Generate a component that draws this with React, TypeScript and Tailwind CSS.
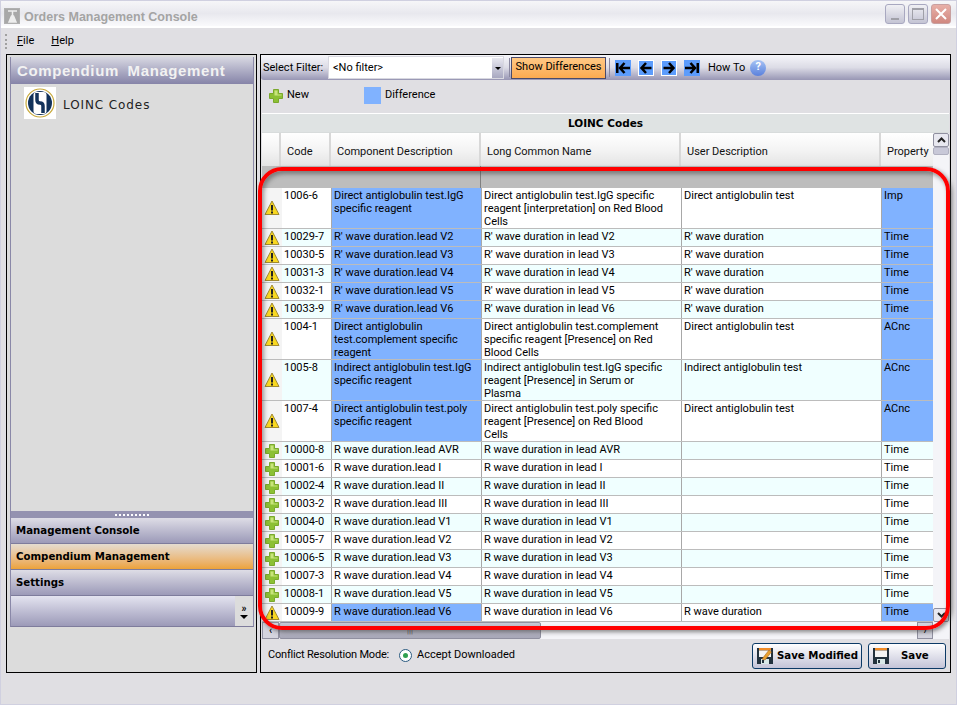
import type { ReactNode } from 'react';

type Row = {
  kind: 'warn' | 'new';
  code: string;
  comp: string;
  long: string;
  user: string;
  prop: string;
  h: number;
};

const rows: Row[] = [
  { kind: 'warn', code: '1006-6', comp: 'Direct antiglobulin test.IgG specific reagent', long: 'Direct antiglobulin test.IgG specific reagent [interpretation] on Red Blood Cells', user: 'Direct antiglobulin test', prop: 'Imp', h: 41 },
  { kind: 'warn', code: '10029-7', comp: "R' wave duration.lead V2", long: "R' wave duration in lead V2", user: "R' wave duration", prop: 'Time', h: 18 },
  { kind: 'warn', code: '10030-5', comp: "R' wave duration.lead V3", long: "R' wave duration in lead V3", user: "R' wave duration", prop: 'Time', h: 18 },
  { kind: 'warn', code: '10031-3', comp: "R' wave duration.lead V4", long: "R' wave duration in lead V4", user: "R' wave duration", prop: 'Time', h: 18 },
  { kind: 'warn', code: '10032-1', comp: "R' wave duration.lead V5", long: "R' wave duration in lead V5", user: "R' wave duration", prop: 'Time', h: 18 },
  { kind: 'warn', code: '10033-9', comp: "R' wave duration.lead V6", long: "R' wave duration in lead V6", user: "R' wave duration", prop: 'Time', h: 18 },
  { kind: 'warn', code: '1004-1', comp: 'Direct antiglobulin test.complement specific reagent', long: 'Direct antiglobulin test.complement specific reagent [Presence] on Red Blood Cells', user: 'Direct antiglobulin test', prop: 'ACnc', h: 41 },
  { kind: 'warn', code: '1005-8', comp: 'Indirect antiglobulin test.IgG specific reagent', long: 'Indirect antiglobulin test.IgG specific reagent [Presence] in Serum or Plasma', user: 'Indirect antiglobulin test', prop: 'ACnc', h: 41 },
  { kind: 'warn', code: '1007-4', comp: 'Direct antiglobulin test.poly specific reagent', long: 'Direct antiglobulin test.poly specific reagent [Presence] on Red Blood Cells', user: 'Direct antiglobulin test', prop: 'ACnc', h: 41 },
  { kind: 'new', code: '10000-8', comp: 'R wave duration.lead AVR', long: 'R wave duration in lead AVR', user: '', prop: 'Time', h: 18 },
  { kind: 'new', code: '10001-6', comp: 'R wave duration.lead I', long: 'R wave duration in lead I', user: '', prop: 'Time', h: 18 },
  { kind: 'new', code: '10002-4', comp: 'R wave duration.lead II', long: 'R wave duration in lead II', user: '', prop: 'Time', h: 18 },
  { kind: 'new', code: '10003-2', comp: 'R wave duration.lead III', long: 'R wave duration in lead III', user: '', prop: 'Time', h: 18 },
  { kind: 'new', code: '10004-0', comp: 'R wave duration.lead V1', long: 'R wave duration in lead V1', user: '', prop: 'Time', h: 18 },
  { kind: 'new', code: '10005-7', comp: 'R wave duration.lead V2', long: 'R wave duration in lead V2', user: '', prop: 'Time', h: 18 },
  { kind: 'new', code: '10006-5', comp: 'R wave duration.lead V3', long: 'R wave duration in lead V3', user: '', prop: 'Time', h: 18 },
  { kind: 'new', code: '10007-3', comp: 'R wave duration.lead V4', long: 'R wave duration in lead V4', user: '', prop: 'Time', h: 18 },
  { kind: 'new', code: '10008-1', comp: 'R wave duration.lead V5', long: 'R wave duration in lead V5', user: '', prop: 'Time', h: 18 },
  { kind: 'warn', code: '10009-9', comp: 'R wave duration.lead V6', long: 'R wave duration in lead V6', user: 'R wave duration', prop: 'Time', h: 18 },
];

function WarnIcon() {
  return (
    <svg width="16" height="16" viewBox="0 0 16 16">
      <path d="M8 1 L15 14.5 H1 Z" fill="#f8d820" stroke="#a08a30" strokeWidth="1" strokeLinejoin="round" />
      <rect x="7" y="5" width="2" height="5.5" fill="#222" />
      <rect x="7" y="11.5" width="2" height="2" fill="#222" />
    </svg>
  );
}

function PlusIcon() {
  return (
    <svg width="14" height="14" viewBox="0 0 14 14">
      <path d="M4.5 0.5 H9.5 V4.5 H13.5 V9.5 H9.5 V13.5 H4.5 V9.5 H0.5 V4.5 H4.5 Z" fill="#8cc034" stroke="#7aa82c" strokeWidth="1" />
      <path d="M5.5 1.5 H8.5 V5.5 H12.5 V6.5 H5.5 Z" fill="#c8e47c" />
    </svg>
  );
}

function NavIcon({ dir, framed }: { dir: 'first' | 'prev' | 'next' | 'last'; framed?: boolean }) {
  const flip = dir === 'next' || dir === 'last';
  const bar = dir === 'first' || dir === 'last';
  return (
    <span className={`flex h-[16px] w-[16px] items-center justify-center bg-[#5c9cfc] ${framed ? 'border border-white' : ''}`}>
      <svg width="14" height="12" viewBox="0 0 14 12" className={flip ? '-scale-x-100' : ''}>
        {bar && <rect x="0" y="1" width="2.5" height="10" fill="#000" />}
        <path d={bar ? 'M8.5 1 L4 6 L8.5 11 M4.5 6 H14' : 'M7 1 L2.5 6 L7 11 M3 6 H12.5'} fill="none" stroke="#000" strokeWidth="2.5" />
      </svg>
    </span>
  );
}

function Logo() {
  return (
    <div className="flex h-[32px] w-[32px] items-center justify-center bg-white">
      <svg width="30" height="30" viewBox="0 0 30 30">
        <circle cx="15" cy="15" r="14" fill="#fff" stroke="#c8a93a" strokeWidth="1.2" />
        <circle cx="15" cy="15" r="12" fill="#12325a" />
        <rect x="8.5" y="4" width="13" height="22" rx="3" fill="#fff" />
        <path d="M12 5 V12 Q12 15 15 15 Q18 15 18 18 V25" fill="none" stroke="#12325a" strokeWidth="3.5" />
      </svg>
    </div>
  );
}

function DiskIcon({ pencil }: { pencil?: boolean }) {
  return (
    <svg width="18" height="18" viewBox="0 0 18 18">
      <rect x="1" y="1" width="16" height="16" fill="#23323e" />
      <rect x="3" y="1" width="12" height="2.5" fill="#f08c28" />
      <rect x="3" y="3.5" width="12" height="6.5" fill="#f4f4f4" />
      <rect x="5" y="12" width="8" height="5" fill="#d8e8e8" />
      <rect x="6" y="13" width="2" height="3" fill="#23323e" />
      {pencil && <path d="M6 12 L13 3 L15.5 5 L9 13 Z" fill="#e8a030" stroke="#a05a18" strokeWidth="0.5" />}
    </svg>
  );
}

function SaveButton({ label, icon, className, gapClass }: { label: string; icon: ReactNode; className: string; gapClass: string }) {
  return (
    <button className={`flex h-[26px] items-center whitespace-nowrap rounded-[3px] border border-[#0c3a66] bg-gradient-to-b from-white to-[#c4c4d8] pl-[3px] font-['DejaVu_Sans',sans-serif] text-[10.2px] font-bold text-black ${className}`}>
      {icon}
      <span className={gapClass}>{label}</span>
    </button>
  );
}

function ScrollArrow({ up }: { up?: boolean }) {
  return (
    <svg width="9" height="6" viewBox="0 0 9 6">
      <path d={up ? 'M1 5 L4.5 1.5 L8 5' : 'M1 1 L4.5 4.5 L8 1'} fill="none" stroke="#222" strokeWidth="2" />
    </svg>
  );
}

function HeaderCell({ label, w }: { label: string; w: string }) {
  return (
    <div className={`flex h-full items-center border-r-2 border-r-[#d8d8d8] bg-gradient-to-b from-white via-[#f4f4f4] to-[#e4e4e4] pl-[6px] pt-[6px] ${w}`}>
      {label}
    </div>
  );
}

function DataRow({ row, odd }: { row: Row; odd: boolean }) {
  const bg = odd ? 'bg-[#f0ffff]' : 'bg-white';
  const cell = 'overflow-hidden border-r border-r-[#a8a8a8] pl-[2px] pt-[1px] leading-[13px]';
  return (
    <div className={`flex border-b border-b-[#bcbcbc] ${bg}`} style={{ height: row.h }}>
      <div className="flex w-[20px] items-center justify-center bg-[#f4f4f4]">
        {row.kind === 'warn' ? <WarnIcon /> : <PlusIcon />}
      </div>
      <div className={`w-[50px] pr-[2px] ${cell}`}>{row.code}</div>
      <div className={`w-[150px] pr-[2px] ${cell} ${row.kind === 'warn' ? 'bg-[#80b2ff]' : ''}`}>{row.comp}</div>
      <div className={`w-[200px] pr-[12px] ${cell}`}>{row.long}</div>
      <div className={`w-[200px] pr-[2px] ${cell}`}>{row.user}</div>
      <div className={`w-[51px] overflow-hidden pl-[2px] pt-[1px] leading-[13px] ${row.kind === 'warn' ? 'bg-[#80b2ff]' : ''}`}>{row.prop}</div>
    </div>
  );
}

function NavItem({ label, active }: { label: string; active?: boolean }) {
  return (
    <div className={`flex h-[26px] items-center border-b border-b-[#7e7c9c] pl-[5px] pt-[1px] font-['DejaVu_Sans',sans-serif] text-[10.2px] font-bold text-black ${active ? 'bg-gradient-to-b from-[#e4dcd0] to-[#eca238]' : 'bg-gradient-to-b from-[#dedde6] to-[#9c9ab8]'}`}>
      {label}
    </div>
  );
}

export default function App() {
  return (
    <div className="relative flex h-[705px] w-[957px] flex-col overflow-hidden border border-[#d0d0e0] bg-[#e0dfe3] font-['Roboto',sans-serif] text-[11px] text-black">
      {/* title bar */}
      <div className="flex h-[27px] shrink-0 items-center border-b-2 border-b-white bg-gradient-to-b from-[#f6f6f8] via-[#e8e8ee] to-[#fafafc] pl-[3px] pr-[5px]">
        <div className="mt-[5px] flex h-[16px] w-[16px] items-center justify-center border border-[#b0b0b0] bg-[#a8a8a8]">
          <svg width="13" height="13" viewBox="0 0 13 13">
            <path d="M2 1 H11 M6.5 1 V8 M3 12 L5.5 6 H7.5 L10 12 Z" stroke="#eee" strokeWidth="1.5" fill="#eee" />
          </svg>
        </div>
        <span className="ml-[4px] mt-[7px] font-['Liberation_Sans',sans-serif] text-[12.5px] font-bold text-[#a4a4a4]">Orders Management Console</span>
        <div className="ml-auto flex gap-[3px]">
          <div className="flex h-[20px] w-[20px] items-end justify-center rounded-[3px] border border-[#a8a8c0] bg-gradient-to-b from-[#f0f0f4] to-[#c4c4d4] pb-[3px]">
            <div className="h-[2px] w-[8px] bg-[#a0a0a8]" />
          </div>
          <div className="flex h-[20px] w-[20px] items-center justify-center rounded-[3px] border border-[#a8a8c0] bg-gradient-to-b from-[#f0f0f4] to-[#c4c4d4]">
            <div className="h-[12px] w-[12px] border border-t-2 border-[#a0a0a8]" />
          </div>
          <div className="flex h-[20px] w-[20px] items-center justify-center rounded-[3px] border border-[#c8a0a0] bg-gradient-to-b from-[#e8b0a8] to-[#d08880]">
            <svg width="12" height="12" viewBox="0 0 12 12">
              <path d="M1 1 L11 11 M11 1 L1 11" stroke="#fff" strokeWidth="2" />
            </svg>
          </div>
        </div>
      </div>

      {/* menu */}
      <div className="flex h-[26px] shrink-0 items-center pl-[4px]">
        <div className="h-[15px] w-[3px] border-l-2 border-dotted border-l-[#a0a0a0]" />
        <span className="ml-[9px]"><u>F</u>ile</span>
        <span className="ml-[17px]"><u>H</u>elp</span>
      </div>

      <div className="flex min-h-0 flex-1 gap-[3px] pl-[5px] pr-[5px]">
        {/* left panel */}
        <div className="flex h-[619px] w-[251px] shrink-0 flex-col border border-black bg-[#dcdcdc] pb-[45px] pl-[3px] pr-[2px] pt-[2px]">
          <div className="flex min-h-0 flex-1 flex-col border-x border-b border-x-[#8a88a8] border-b-[#7e7c9c]">
            <div className="flex h-[27px] shrink-0 items-center whitespace-nowrap bg-gradient-to-b from-[#d8d8e2] to-[#8684a8] pl-[6px] pt-[2px] font-['Liberation_Sans',sans-serif] text-[15px] font-bold tracking-[0.6px] text-[#f2f2f2] [word-spacing:4px]">
              Compendium Management
            </div>
            <div className="flex flex-1 items-start pl-[13px] pt-[3px]">
              <Logo />
              <span className="ml-[7px] mt-[9px] font-['DejaVu_Sans',sans-serif] text-[12px] tracking-[0.9px] text-[#222]">LOINC Codes</span>
            </div>
            <div className="flex h-[7px] shrink-0 items-center justify-center bg-[#9492b0]">
              <div className="h-[2px] w-[34px] border-t-2 border-dotted border-t-white" />
            </div>
            <NavItem label="Management Console" />
            <NavItem label="Compendium Management" active />
            <NavItem label="Settings" />
            <div className="flex h-[30px] bg-gradient-to-b from-[#e4e4f0] to-[#9c9ab8]">
              <div className="ml-auto flex w-[18px] flex-col items-center justify-center bg-[#dcdcdc] text-[10px] font-bold leading-[9px]">
                <span>»</span>
                <span className="mt-[2px] h-0 w-0 border-x-[4px] border-t-[4px] border-x-transparent border-t-black" />
              </div>
            </div>
          </div>
        </div>

        {/* right panel */}
        <div className="flex h-[619px] w-[691px] shrink-0 flex-col border border-black bg-[#e0dfe3]">
          <div className="flex h-[25px] shrink-0 items-center rounded-bl-[3px] bg-gradient-to-b from-[#f6f6fa] via-[#dcdce6] to-[#9896b4] pl-[2px]">
            <span className="w-[62px] whitespace-nowrap pt-[2px]">Select Filter:</span>
            <div className="ml-[3px] flex h-[23px] w-[176px] items-center border border-[#d8d8e0] bg-white pl-[4px] pt-[1px]">
              &lt;No filter&gt;
              <div className="ml-auto flex h-full w-[11px] items-center justify-center bg-gradient-to-b from-[#e8e8f0] to-[#a8a8c0]">
                <span className="h-0 w-0 border-x-[3px] border-t-[3px] border-x-transparent border-t-black" />
              </div>
            </div>
            <div className="ml-[5px] h-[19px] w-px bg-[#8a88a0]" />
            <div className="ml-[1px] flex h-[22px] w-[95px] items-center justify-center whitespace-nowrap border border-[#4a4a6a] bg-gradient-to-b from-[#ffc884] to-[#fcaa50]">
              Show Differences
            </div>
            <div className="ml-[3px] h-[19px] w-px bg-[#8a88a0]" />
            <div className="ml-[5px] flex items-center gap-[7px]">
              <NavIcon dir="first" />
              <NavIcon dir="prev" framed />
              <NavIcon dir="next" framed />
              <NavIcon dir="last" />
            </div>
            <span className="ml-[8px] pt-[2px]">How To</span>
            <div className="ml-[5px] flex h-[16px] w-[16px] items-center justify-center rounded-full bg-gradient-to-b from-[#a8c4f4] to-[#5a80dc] text-[11px] font-bold text-white">?</div>
          </div>

          <div className="flex h-[33px] shrink-0 items-center pb-[2px] pl-[8px]">
            <PlusIcon />
            <span className="ml-[4px]">New</span>
            <div className="ml-[55px] h-[17px] w-[17px] bg-[#80b2ff]" />
            <span className="ml-[4px]">Difference</span>
          </div>

          {/* grid */}
          <div className="mx-px flex h-[526px] w-[687px] shrink-0 flex-col overflow-hidden bg-[#f4f4f8]">
            <div className="flex h-[20px] shrink-0 items-center justify-center border-y border-t-white border-b-[#d8dcdc] bg-[#dfe3e3] pt-[2px] font-['DejaVu_Sans',sans-serif] text-[10.5px] font-bold">
              LOINC Codes
            </div>
            <div className="flex min-h-0 flex-1">
              <div className="w-[671px] shrink-0 overflow-hidden">
                <div className="flex h-[33px] text-[#111]">
                  <HeaderCell label="" w="w-[19px]" />
                  <HeaderCell label="Code" w="w-[50px]" />
                  <HeaderCell label="Component Description" w="w-[150px]" />
                  <HeaderCell label="Long Common Name" w="w-[200px]" />
                  <HeaderCell label="User Description" w="w-[200px]" />
                  <div className="flex h-full w-[52px] items-center bg-gradient-to-b from-white to-[#ececec] pl-[6px] pt-[6px]">Property</div>
                </div>
                <div className="flex h-[22px] bg-[#bdbdbd]">
                  <div className="w-[219px] border-r border-r-[#808080]" />
                </div>
                {rows.map((r, i) => (
                  <DataRow key={r.code} row={r} odd={i % 2 === 1} />
                ))}
              </div>
              <div className="flex w-[16px] shrink-0 flex-col">
                <div className="flex h-[14px] items-center justify-center rounded-[2px] border border-[#9090a0] bg-[#e8e8f0]"><ScrollArrow up /></div>
                <div className="h-[8px] rounded-[2px] border border-[#b0b0c0] bg-[#c8c8d8]" />
                <div className="mt-auto flex h-[14px] items-center justify-center rounded-[2px] border border-[#9090a0] bg-[#e8e8f0]"><ScrollArrow /></div>
              </div>
            </div>
            <div className="flex h-[17px] shrink-0 items-center">
              <div className="flex h-full w-[17px] items-center justify-center border border-[#9090a0] bg-[#d4d4de] text-[10px] font-bold">‹</div>
              <div className="flex h-full w-[262px] items-center justify-center rounded-[2px] border border-[#9090a0] bg-gradient-to-b from-[#c8c8d4] to-[#a8a8b8] text-[8px] text-[#555]">|||</div>
              <div className="ml-auto mr-[16px] flex h-full w-[16px] items-center justify-center border border-[#9090a0] bg-[#d4d4de] text-[10px] font-bold">›</div>
            </div>
          </div>

          {/* footer */}
          <div className="flex min-h-0 flex-1 items-center pl-[7px] pr-[4px]">
            <span className="tracking-[-0.2px]">Conflict Resolution Mode:</span>
            <div className="ml-[10px] flex h-[13px] w-[13px] items-center justify-center rounded-full border border-[#2a5a80] bg-white">
              <div className="h-[5px] w-[5px] rounded-full bg-[#30a050]" />
            </div>
            <span className="ml-[5px]">Accept Downloaded</span>
            <div className="ml-auto flex gap-[6px]">
              <SaveButton label="Save Modified" icon={<DiskIcon pencil />} className="w-[110px]" gapClass="ml-[3px]" />
              <SaveButton label="Save" icon={<DiskIcon />} className="w-[78px]" gapClass="ml-[11px]" />
            </div>
          </div>
        </div>
      </div>

      {/* red highlight drawn over the grid */}
      <div className="pointer-events-none absolute left-[257px] top-[166px] h-[463px] w-[692px] rounded-[24px] border-[4px] border-[#ff0000] shadow-[2px_2px_4px_rgba(60,60,60,0.6),inset_2px_3px_4px_rgba(60,60,60,0.5)]" />
    </div>
  );
}
